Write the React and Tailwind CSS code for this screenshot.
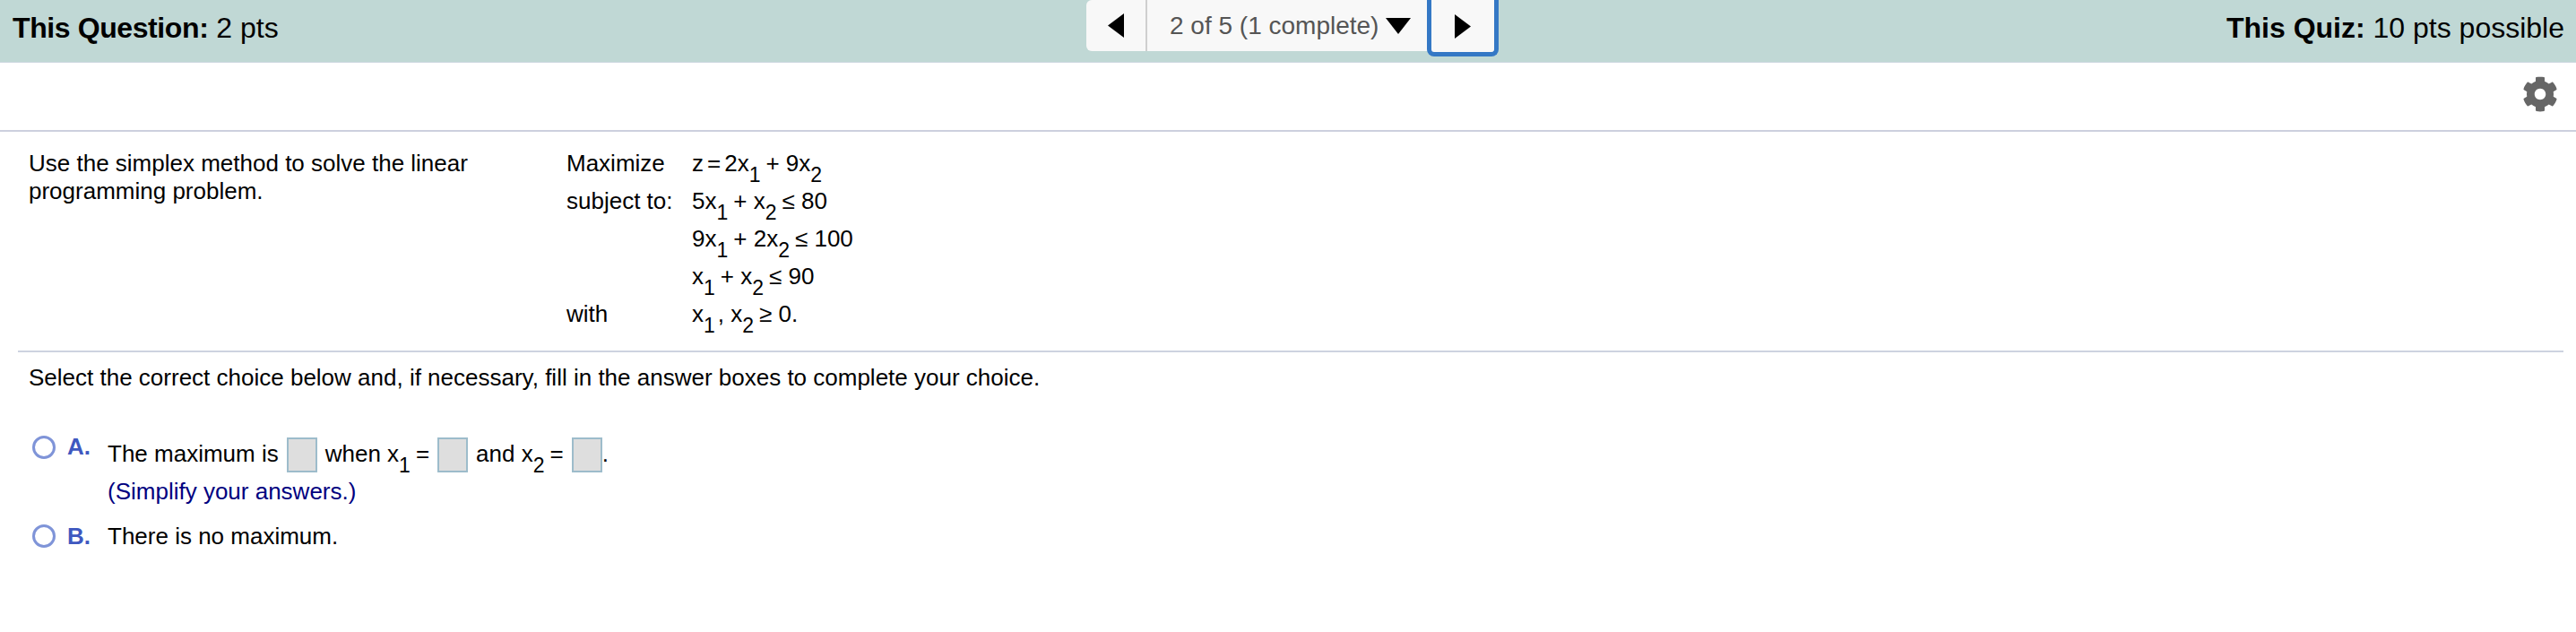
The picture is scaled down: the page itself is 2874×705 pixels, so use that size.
import { FaCog } from "react-icons/fa";

function X({ n }) {
    return (
        <span className="mr-[6px]">
            x<sub className="text-[23px] leading-none align-[-6px]">{n}</sub>
        </span>
    );
}

function Blank() {
    return <span className="inline-block align-middle w-[34px] h-[39px] mx-[9px] -mt-[2px] bg-[#dedede] border-2 border-[#9dbccb]"></span>;
}

function Radio() {
    return <span className="block shrink-0 w-[26px] h-[26px] rounded-full border-[3px] border-[#7f94d8] bg-white"></span>;
}

export default function App() {
    return (
        <div className="min-h-screen bg-white text-black text-[26px] font-['Liberation_Sans',Arial,sans-serif]">

            {/* TOP BAR */}
            <header className="h-[70px] bg-[#c0d8d5] border-b border-[#cdd8e0] grid grid-cols-[1fr_auto_1fr] items-start text-[32px]">
                <div className="pl-[14px] pt-[11px] leading-[40px]">
                    <b className="tracking-[-0.4px]">This Question:</b> 2 pts
                </div>

                <nav className="flex items-start ml-[10px]">
                    <div className="flex h-[57px] bg-[#f8f8f8] rounded-l-md">
                        <button className="w-[68px] flex items-center justify-center border-r-2 border-[#cfcfcf]">
                            <svg width="18" height="27" viewBox="0 0 18 27"><path d="M18 0V27L0 13.5Z" fill="#000" /></svg>
                        </button>
                        <button className="w-[312px] flex items-center pl-[25px] gap-[8px] text-[28px] text-[#555]">
                            2 of 5 (1 complete)
                            <svg width="28" height="18" viewBox="0 0 28 18"><path d="M0 0H28L14 18Z" fill="#000" /></svg>
                        </button>
                    </div>
                    <button className="w-[80px] h-[63px] flex items-center justify-center bg-[#f8f8f8] border-[5px] border-t-0 border-[#3478c5] rounded-b-lg">
                        <svg width="18" height="27" viewBox="0 0 18 27"><path d="M0 0V27L18 13.5Z" fill="#000" /></svg>
                    </button>
                </nav>

                <div className="pr-[13px] pt-[11px] leading-[40px] text-right">
                    <b>This Quiz:</b> 10 pts possible
                </div>
            </header>

            {/* TOOL ROW */}
            <div className="h-[77px] pb-[6px] border-b-2 border-[#cdd0de] flex items-center justify-end pr-[20px]">
                <FaCog size={40} color="#666666" />
            </div>

            {/* QUESTION */}
            <section className="ml-[20px] mr-[14px] h-[246px] border-b-2 border-[#cdd3e0] pl-[12px] pt-[14px] flex">
                <p className="w-[600px] mt-[6px] leading-[31px] shrink-0">
                    Use the simplex method to solve the linear<br />programming problem.
                </p>
                <div className="grid grid-cols-[140px_auto] auto-rows-[42px] leading-[42px]">
                    <span>Maximize</span>
                    <span>z<span className="mx-[4px]">=</span>2<X n={1} />+ 9<X n={2} /></span>
                    <span>subject to:</span>
                    <span>5<X n={1} />+ <X n={2} />≤ 80</span>
                    <span></span>
                    <span>9<X n={1} />+ 2<X n={2} />≤ 100</span>
                    <span></span>
                    <span><X n={1} />+ <X n={2} />≤ 90</span>
                    <span>with</span>
                    <span><X n={1} /><span className="-ml-[3px]">,</span> <X n={2} />≥ 0.</span>
                </div>
            </section>

            {/* ANSWERS */}
            <section className="pl-[32px] pt-[12px]">
                <p className="leading-[32px]">Select the correct choice below and, if necessary, fill in the answer boxes to complete your choice.</p>

                <div className="mt-[49px] ml-[4px] flex items-start">
                    <Radio />
                    <span className="w-[58px] pl-[13px] font-bold text-[#3f58c0] leading-[24px]">A.</span>
                    <div className="leading-[42px] -mt-[1px]">
                        <div className="h-[42px] whitespace-nowrap">
                            The maximum is<Blank />when <X n={1} />=<Blank />and <X n={2} />=<Blank /><span className="-ml-[9px]">.</span>
                        </div>
                        <div className="text-[#00007f]">(Simplify your answers.)</div>
                    </div>
                </div>

                <div className="mt-[16px] ml-[4px] flex items-start">
                    <Radio />
                    <span className="w-[58px] pl-[13px] font-bold text-[#3f58c0] leading-[26px]">B.</span>
                    <div className="leading-[26px]">There is no maximum.</div>
                </div>
            </section>
        </div>
    );
}
